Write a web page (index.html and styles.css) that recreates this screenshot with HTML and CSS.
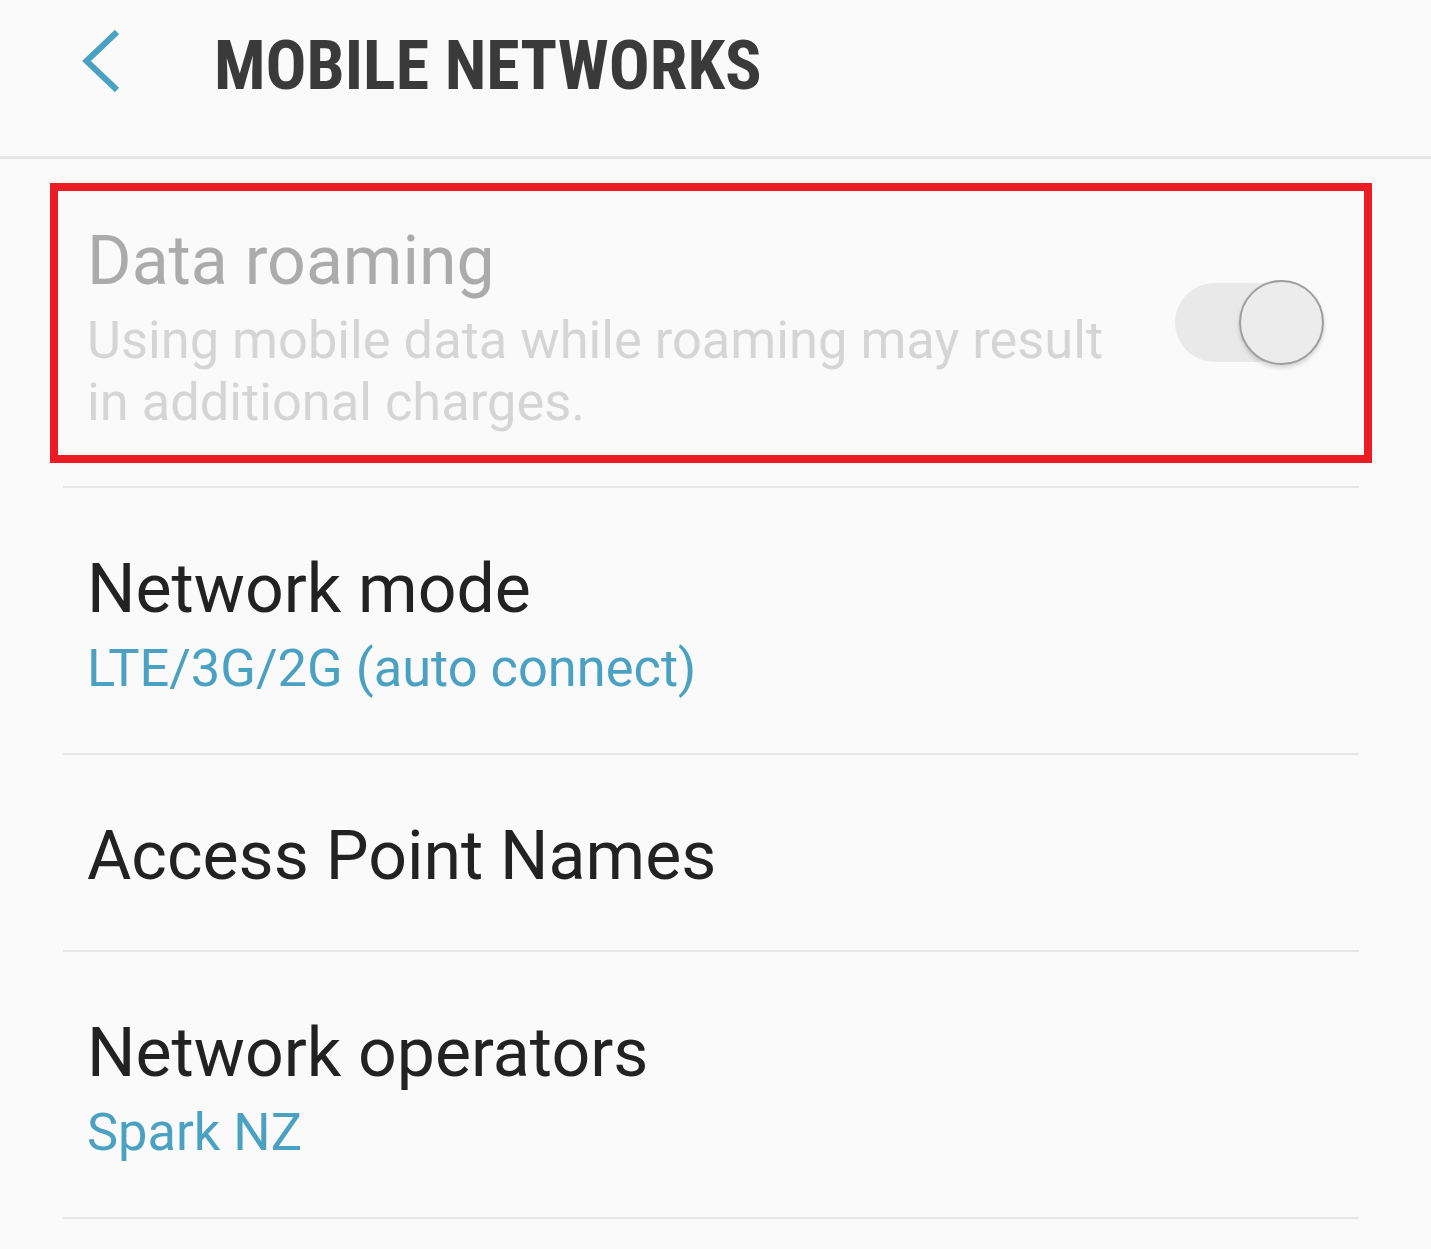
FILE: index.html
```html
<!DOCTYPE html>
<html>
  <head>
    <title>Mobile networks</title>
    <meta charset="UTF-8">
    <link rel="stylesheet" href="styles.css">
  </head>
  <body>
    <div class="topbar">
      <svg class="back" width="42" height="68" viewBox="0 0 42 68">
        <path d="M37 5 L6.5 34 L37 63" fill="none" stroke="#4aa2c3" stroke-width="6"/>
      </svg>
      <h1 class="title">MOBILE NETWORKS</h1>
    </div>

    <div class="list">
      <div class="row first">
        <div class="marked">
          <div class="text">
            <div class="label dim">Data roaming</div>
            <div class="sub faint">Using mobile data while roaming may result in additional charges.</div>
          </div>
          <div class="switch">
            <div class="track"></div>
            <div class="thumb"></div>
          </div>
        </div>
      </div>

      <div class="row">
        <div class="label">Network mode</div>
        <div class="sub blue">LTE/3G/2G (auto connect)</div>
      </div>

      <div class="row">
        <div class="label">Access Point Names</div>
      </div>

      <div class="row">
        <div class="label">Network operators</div>
        <div class="sub blue">Spark NZ</div>
      </div>
    </div>
  </body>
</html>
```

FILE: styles.css
```css
body {
  margin: 0;
  background-color: #fafafa;
  font-family: Roboto, "Noto Sans", sans-serif;
}

.topbar {
  display: flex;
  align-items: flex-start;
  height: 156px;
  border-bottom: 3px solid #e6e6e6;
}

.back {
  margin: 27px 0 0 80px;
}

.title {
  margin: 26px 0 0 92px;
  font-family: "Roboto Condensed", "DejaVu Sans Condensed", "Liberation Sans Narrow", Roboto, sans-serif;
  font-weight: 700;
  font-size: 68px;
  line-height: 80px;
  color: #3a3a3a;
}

.list {
  margin: 0 72px 0 63px;
}

.row {
  padding: 61px 0 54px 24px;
  border-bottom: 2px solid #e6e6e6;
}

.row.first {
  padding: 24px 0 23px 0;
}

.marked {
  display: flex;
  align-items: center;
  margin: 0 -13px;
  padding: 30px 40px 22px 29px;
  border: 8px solid #ed1c24;
}

.text {
  flex: 1;
  margin-right: 55px;
}

.label {
  font-size: 68px;
  line-height: 80px;
  color: #222222;
}

.sub {
  margin-top: 8px;
  font-size: 52.4px;
  line-height: 62px;
}

.dim {
  color: #ababab;
}

.faint {
  color: #d5d5d5;
}

.blue {
  color: #4aa1c2;
}

.switch {
  position: relative;
  width: 149px;
  height: 85px;
  margin-top: -10px;
}

.track {
  margin-top: 3px;
  width: 140px;
  height: 79px;
  border-radius: 40px;
  background-color: #e9e9e9;
}

.thumb {
  position: absolute;
  top: 0;
  right: 0;
  width: 81px;
  height: 81px;
  border-radius: 50%;
  border: 2px solid #9e9e9e;
  background-color: #ececec;
  box-shadow: 0 3px 4px rgba(0, 0, 0, 0.15);
}
```
